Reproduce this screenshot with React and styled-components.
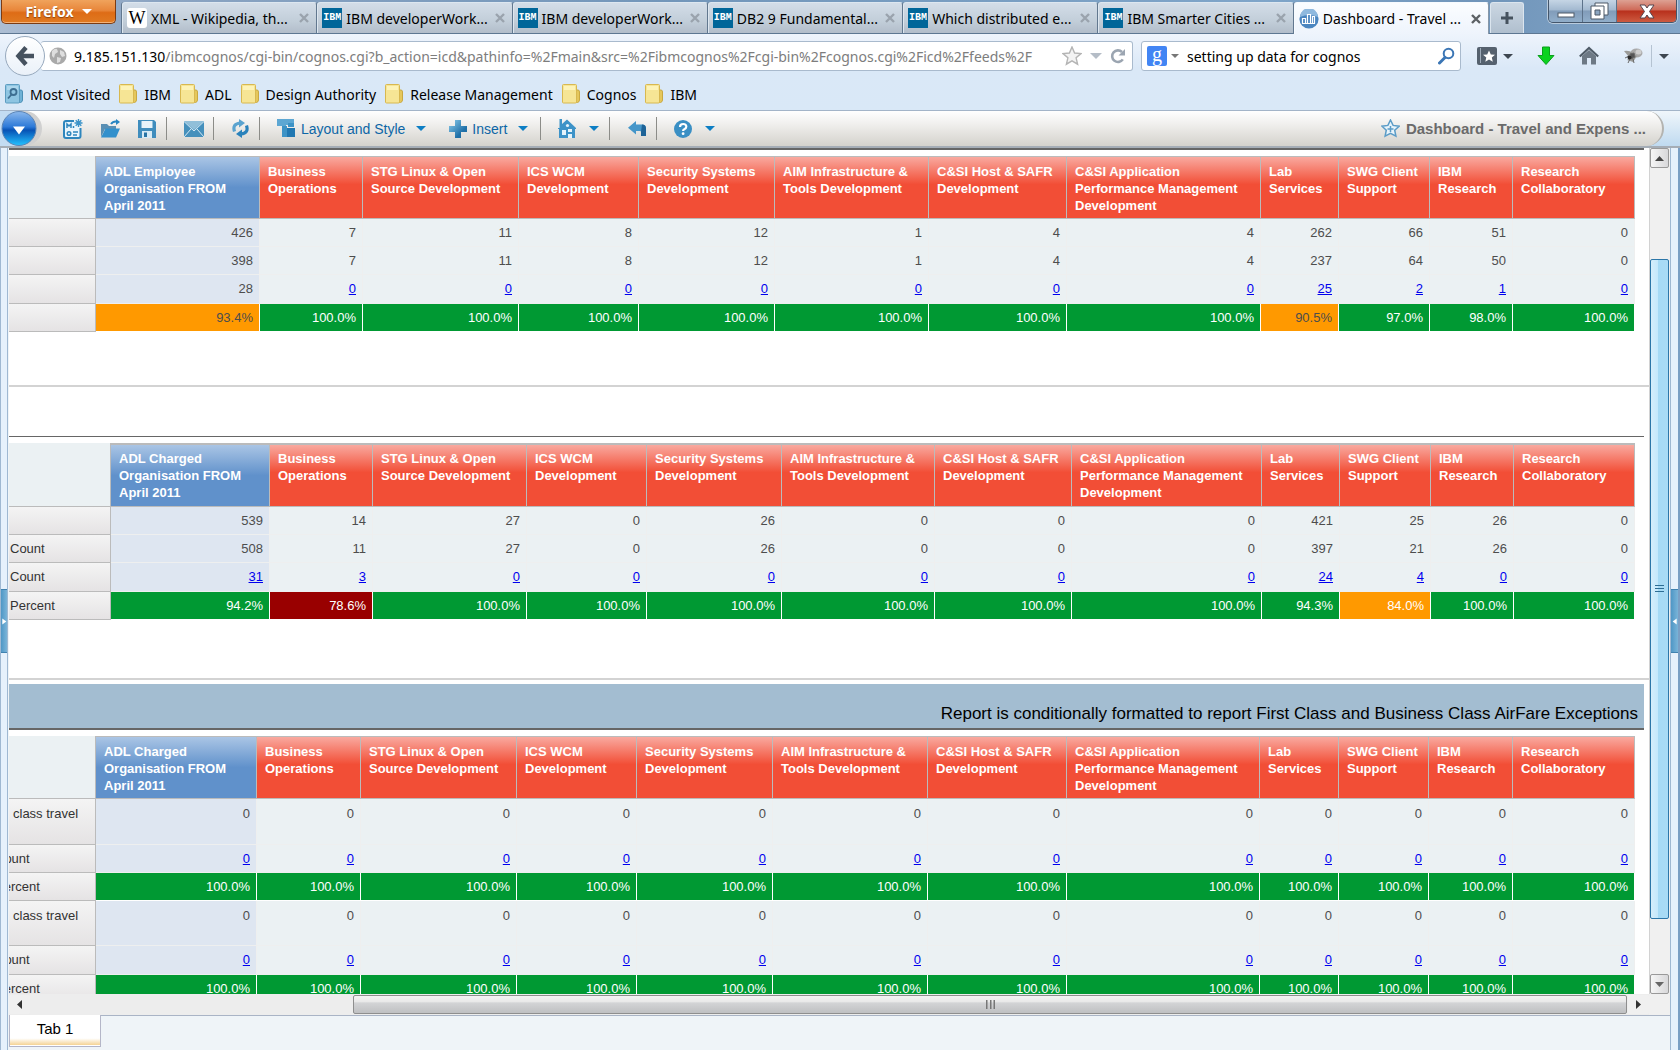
import React from "react";
import styled, { createGlobalStyle, css } from "styled-components";

const uiFont = '"Noto Sans", "Open Sans", sans-serif';
const reportFont = '"Liberation Sans", Arial, sans-serif';

const GlobalStyle = createGlobalStyle`
  *, *::before, *::after { box-sizing: border-box; }
  body { margin: 0; font-family: ${uiFont}; font-size: 14px; color: #000; background: #eff4f8; }
  button, input { font: inherit; color: inherit; margin: 0; padding: 0; border: 0; background: none; }
  svg { display: block; flex: none; }
`;

const Window = styled.div`
  display: flex;
  flex-direction: column;
  height: 100vh;
  overflow: hidden;
`;

/* ---------- title bar ---------- */
const TitleBar = styled.header`
  display: flex;
  height: 34px;
  flex: none;
  padding: 0 3px 0 1px;
  background: linear-gradient(100deg, #aebfd4 0, #8ba4c2 9%, #7296ba 40%, #7fa5c9 75%, #7095ba 88%, #84a6c8 100%);
  border-bottom: 1px solid #5d7792;
`;

const FirefoxButton = styled.button`
  display: flex;
  align-items: center;
  justify-content: center;
  gap: 8px;
  width: 115px;
  height: 24px;
  margin-right: 6px;
  color: #fff;
  font-size: 14px;
  font-weight: 700;
  text-shadow: 0 1px 1px #8a4410;
  background: linear-gradient(#f0a35c, #e8863a 45%, #de6c16 55%, #e07a22);
  border: 1px solid #7c3b12;
  border-top: 0;
  border-radius: 0 0 5px 5px;
  box-shadow: inset 0 -1px 0 #f3b27a;
`;

const TabStrip = styled.nav`
  display: flex;
  flex: 1;
  min-width: 0;
  padding-top: 2px;
`;

const BrowserTab = styled.div`
  display: flex;
  align-items: center;
  flex: 1 1 0;
  min-width: 0;
  height: ${(p) => (p.$active ? 32 : 31)}px;
  padding: 0 7px 0 4px;
  gap: 4px;
  background: ${(p) => (p.$active ? "linear-gradient(#fbfdff, #eef4fc)" : "linear-gradient(#d3dde8, #c2ced9 60%, #b2bdca)")};
  border: 1px solid ${(p) => (p.$active ? "#f7fbff" : "#dde7f0")};
  border-bottom: 0;
  border-right-color: #8697a8;
  border-radius: 3px 3px 0 0;
  box-shadow: -1px 0 0 #62788f;
`;

const TabLabel = styled.span`
  flex: 1;
  min-width: 0;
  white-space: nowrap;
`;

const Favicon = styled.span`
  display: grid;
  place-items: center;
  width: 20px;
  height: 20px;
  flex: none;
  border-radius: ${(p) => (p.$kind === "wiki" ? 3 : 0)}px;
  color: ${(p) => (p.$kind === "wiki" ? "#000" : "#fff")};
  background: ${(p) => ({ wiki: "#fff", ibm: "#006699", cognos: "transparent" })[p.$kind]};
  font: ${(p) => (p.$kind === "wiki" ? '18px/20px "Liberation Serif", serif' : '700 10px/20px "Liberation Mono", monospace')};
`;

const CloseButton = styled.button`
  width: 10px;
  height: 16px;
  color: ${(p) => (p.$active ? "#5c6165" : "#9aa3ad")};
`;

const NewTabButton = styled.button`
  display: grid;
  place-items: center;
  width: 34px;
  height: 31px;
  margin: 2px 24px 0 1px;
  color: #46525e;
  background: linear-gradient(#cbd7e3, #b0bfce);
  border: 1px solid #dbe5ee;
  border-bottom: 0;
  border-radius: 3px 3px 0 0;
`;

const WindowButtons = styled.div`
  display: flex;
  height: 23px;
  border: 1px solid #44566b;
  border-top: 0;
  border-radius: 0 0 5px 5px;
  overflow: hidden;
  box-shadow: 0 0 0 1px #b9cbdd;
`;

const WindowButton = styled.button`
  display: grid;
  place-items: center;
  width: ${(p) => (p.$close ? 59 : 34)}px;
  border-right: ${(p) => (p.$close ? 0 : 1)}px solid #5c728a;
  background: ${(p) =>
    p.$close
      ? "linear-gradient(#dda193, #cf6a58 45%, #b8301c 50%, #cd5a40)"
      : "linear-gradient(#c5d5e5, #a3b9d0 45%, #819cb9 50%, #91aeca)"};
`;

/* ---------- navigation ---------- */
const BrowserChrome = styled.div`
  flex: none;
  background: linear-gradient(#eef4fc, #dae8f7 45%, #d9e8f7);
  border-bottom: 1px solid #a3b4c8;
`;

const NavBar = styled.div`
  display: flex;
  align-items: center;
  height: 44px;
  padding: 0 11px 0 5px;
`;

const BackButton = styled.button`
  display: grid;
  place-items: center;
  width: 40px;
  height: 40px;
  flex: none;
  z-index: 1;
  margin-right: -4px;
  border: 1px solid #97a9bd;
  border-radius: 50%;
  background: linear-gradient(#fff, #eaf1f9);
`;

const Field = styled.label`
  display: flex;
  align-items: center;
  height: 30px;
  background: #fff;
  border: 1px solid #a9bacd;
  border-radius: 3px;
`;

const UrlField = styled(Field)`
  flex: 1;
  min-width: 0;
  padding: 0 6px 0 8px;
  margin-right: 8px;
  border-left: 0;
`;

const Host = styled.span`
  margin-left: 7px;
`;

const UrlInput = styled.input`
  flex: 1;
  min-width: 0;
  color: #7d7d7d;
  outline: 0;
`;

const UrlTools = styled.span`
  display: flex;
  align-items: center;
  gap: 8px;
  padding-left: 6px;
`;

const SearchField = styled(Field)`
  width: 320px;
  padding: 0 5px;
`;

const GoogleBadge = styled.span`
  width: 20px;
  height: 20px;
  margin-right: 4px;
  flex: none;
  color: #fff;
  text-align: center;
  font: 20px/16px "Liberation Serif", serif;
  background: #4285f4;
  border-radius: 2px;
`;

const SearchInput = styled.input`
  flex: 1;
  min-width: 0;
  padding-left: 8px;
  outline: 0;
`;

const NavIcons = styled.div`
  display: flex;
  align-items: center;
  padding-left: 16px;
  gap: 24px;
`;

const IconButton = styled.button`
  display: flex;
  align-items: center;
  gap: 6px;
`;

const MoreButton = styled(IconButton)`
  height: 22px;
  padding-left: 7px;
  margin-left: -16px;
  border-left: 1px solid #b5c3d2;
`;

const Triangle = styled.span`
  width: 0;
  height: 0;
  flex: none;
  border: ${(p) => p.$size || 5}px solid transparent;
  border-top-color: ${(p) => p.$color || "#3d4650"};
  border-bottom: 0;
`;

const BookmarkBar = styled.div`
  display: flex;
  align-items: center;
  height: 32px;
  padding-left: 5px;
  gap: 9px;
`;

const Bookmark = styled.a`
  display: flex;
  align-items: center;
  gap: 7px;
  color: #000;
  text-decoration: none;
  white-space: nowrap;
`;

/* ---------- Cognos toolbar ---------- */
const ToolRow = styled.div`
  display: flex;
  flex: none;
  height: 37px;
  background: linear-gradient(#f0f6fb, #bfdaf0);
  border-bottom: 2px solid #a5adb6;
`;

const Toolbar = styled.div`
  display: flex;
  align-items: center;
  flex: 1;
  min-width: 0;
  margin-right: 16px;
  padding-right: 16px;
  font-family: ${reportFont};
  font-size: 14px;
  color: #0d66a6;
  background: linear-gradient(#fff, #efeeec 40%, #d4d2cc);
  border-right: 2px solid #b3b3b0;
  border-radius: 0 18px 18px 0;
`;

const OrbButton = styled.button`
  display: grid;
  place-items: center;
  width: 42px;
  height: 35px;
  padding-right: 4px;
  margin-right: 21px;
  background: linear-gradient(90deg, #c3dcf2 50%, #d0d0d0 50%);
  border-radius: 0 18px 18px 0;
`;

const Tool = styled.button`
  display: flex;
  align-items: center;
  gap: ${(p) => p.$gap || 5}px;
  margin-right: ${(p) => p.$after || 0}px;
  white-space: nowrap;
`;

const ToolText = styled.span`
  margin-right: 6px;
`;

const Separator = styled.span`
  width: 1px;
  height: 23px;
  flex: none;
  margin-right: ${(p) => p.$after}px;
  background: #8c8c88;
`;

const DashboardTitle = styled.h1`
  display: flex;
  align-items: center;
  gap: 6px;
  margin: 0 0 0 auto;
  font-size: 15px;
  font-weight: 700;
  color: #6a6a6a;
  white-space: nowrap;
`;

/* ---------- workspace ---------- */
const Workspace = styled.main`
  display: flex;
  flex: 1;
  min-height: 0;
`;

const SideRail = styled.aside`
  display: flex;
  flex-direction: column;
  justify-content: center;
  flex: none;
  width: ${(p) => (p.$right ? 10 : 8)}px;
  padding-top: 44px;
  background: #e6f1fc;
  border: solid #9fb8d2;
  border-width: 0 1px;
  ${(p) => p.$right && css`border-right: 2px solid #7a9fc4;`}
`;

const RailHandle = styled.button`
  display: grid;
  place-items: center;
  height: 64px;
  color: #fff;
  background: linear-gradient(90deg, #4f97c6, #7ab4d8);
  border: solid #3f82b0;
  border-width: 1px 0;
`;

const Center = styled.div`
  display: flex;
  flex-direction: column;
  flex: 1;
  min-width: 0;
  padding-left: 1px;
`;

const ScrollFrame = styled.div`
  display: grid;
  grid-template: minmax(0, 1fr) 21px / minmax(0, 1fr) 21px;
  flex: 1;
  min-height: 0;
  background: #f0f0f0;
`;

const Reports = styled.div`
  overflow: hidden;
  background: #fff;
  font-family: ${reportFont};
  font-size: 13px;
  line-height: 17px;
`;

const Report = styled.section`
  padding-bottom: ${(p) => p.$space || 0}px;
  border-bottom: 2px solid #d3d3d3;
`;

const Rule = styled.div`
  height: ${(p) => p.$thick || 1}px;
  margin: ${(p) => p.$above || 0}px 5px 6px 0;
  background: #666;
`;

const Banner = styled.h2`
  display: flex;
  justify-content: flex-end;
  align-items: flex-end;
  height: 46px;
  margin: 4px 5px 6px 0;
  padding: 0 6px 4px;
  font-size: 17px;
  line-height: 20px;
  font-weight: 400;
  background: #a3bdd1;
  border-bottom: 2px solid #666;
`;

const Grid = styled.table`
  table-layout: fixed;
  border-collapse: separate;
  border-spacing: 0;
  width: calc(100% - 14px + ${(p) => p.$bleed}px);
  margin-left: -${(p) => p.$bleed}px;
`;

const Col = styled.col`
  width: ${(p) => p.$w}px;
`;

const Corner = styled.td`
  background: #ebf1f3;
  border: solid #bbb;
  border-width: 0 1px 1px 0;
`;

const HeadCell = styled.th`
  height: ${(p) => 62 + p.$edge}px;
  padding: ${(p) => 7 - p.$edge}px 0 4px 8px;
  text-align: left;
  vertical-align: top;
  color: #fff;
  white-space: pre;
  background: ${(p) =>
    p.$lead
      ? "linear-gradient(#aac5e5, #6091cb 50%)"
      : "linear-gradient(#f9a99f, #f24e36 45%)"};
  border: solid #bbb;
  border-width: ${(p) => p.$edge}px 1px 1px 0;
`;

const RowLabel = styled.th`
  padding: ${(p) => (p.$tall ? 6 : 5)}px 0 4px ${(p) => (p.$tall ? 26 : 8)}px;
  text-align: left;
  vertical-align: top;
  font-weight: 400;
  color: #333;
  white-space: nowrap;
  background: linear-gradient(#f4f4f4, #e5e3e4);
  border: solid #bbb;
  border-width: 0 1px 1px 0;
`;

const tones = {
  green: ["#009933", "#fff"],
  red: ["#990000", "#fff"],
  amber: ["#ff9900", "#4d4d4d"],
  amberLight: ["#ff9900", "#fff"],
};

const Cell = styled.td`
  height: ${(p) => p.$h}px;
  padding: ${(p) => (p.$tall ? 6 : 5)}px 6px 4px;
  text-align: right;
  vertical-align: top;
  color: ${(p) => (p.$tone ? tones[p.$tone][1] : "#4d4d4d")};
  background: ${(p) => (p.$tone ? tones[p.$tone][0] : p.$lead ? "#dee6f1" : "#ebf1f3")};
  border: solid ${(p) => (p.$tone ? "#fff" : "#eeefef")};
  border-width: 0 1px 1px 0;
`;

const CellLink = styled.a`
  color: #0000ee;
`;

/* ---------- scroll bars and sheet tabs ---------- */
const VScroll = styled.div`
  display: flex;
  flex-direction: column;
  border-left: 1px solid #d2d2d2;
  background: #f0f0f0;
`;

const HScroll = styled.div`
  display: flex;
  padding: 1px 0;
  background: #ededed;
`;

const ArrowButton = styled.button`
  display: grid;
  place-items: center;
  width: ${(p) => (p.$flat ? 21 : 19)}px;
  height: ${(p) => (p.$flat ? 19 : 20)}px;
  flex: none;
  background: ${(p) => (p.$flat ? "#f0f0f0" : "linear-gradient(90deg, #f6f6f6, #d8d8da)")};
  border: ${(p) => (p.$flat ? 0 : 1)}px solid #999;
  border-radius: 2px;
`;

const Track = styled.div`
  display: grid;
  flex: 1;
  min-width: 0;
  min-height: 0;
  ${(p) =>
    p.$vertical
      ? css`grid-template-rows: 91fr 659fr 55fr;`
      : css`grid-template-columns: 323fr 1274fr 1fr;`}
`;

const VThumb = styled.button`
  display: grid;
  place-items: center;
  grid-row: 2;
  width: 19px;
  background: linear-gradient(90deg, #d5eefb, #c5e8fb 40%, #a6daf5 41%, #a9dbf5);
  border: 1px solid #2c76a8;
  border-radius: 2px;
`;

const HThumb = styled.button`
  display: grid;
  place-items: center;
  grid-column: 2;
  background: linear-gradient(#f4f4f4, #e8e8e8 35%, #d3d4d6 40%, #bfc0c2);
  border: 1px solid #8e8e8e;
  border-radius: 2px;
`;

const SheetBar = styled.div`
  height: 35px;
  flex: none;
  background: #eff4f8;
  border-top: 1px solid #a9b4c6;
`;

const SheetTab = styled.button`
  width: 92px;
  height: 32px;
  margin-top: -1px;
  padding-bottom: 4px;
  font-family: ${reportFont};
  font-size: 15px;
  background: linear-gradient(#fff 75%, #f3cd85);
  border: 1px solid #b4b6c8;
  border-top: 0;
  box-shadow: inset 0 -1px 0 #fff;
`;

/* ---------- icons ---------- */
const CrossIcon = () => (
  <svg width="10" height="16" viewBox="0 0 10 16" stroke="currentColor" strokeWidth="2.4" aria-hidden="true">
    <path d="M1 4l8 8M9 4l-8 8" />
  </svg>
);

const CognosIcon = () => (
  <svg width="20" height="20" viewBox="0 0 20 20" aria-hidden="true">
    <circle cx="10" cy="10" r="9.6" fill="#4b86c0" />
    <path d="M1 8a9 9 0 0 1 18 0q-9-4-18 0z" fill="#8fb9de" />
    <path d="M3.500 14.500v-5h3v5M8.500 14.500v-9h3v9M13.500 14.500v-7h2v7M3 14.500h13" fill="none" stroke="#fff" strokeWidth="1.200" />
  </svg>
);

const FolderIcon = ({ blue }) => (
  <svg width="18" height="20" viewBox="0 0 18 20" aria-hidden="true">
    <path d="M12 6h4q1.500 0 1.500 2v8q0 2-2 2.500H3" fill={blue ? "#6fb2d6" : "#e5c75c"} stroke={blue ? "#4b8fb5" : "#c9a942"} />
    <rect x="0.500" y="0.500" width="14" height="18.500" rx="1" fill={blue ? "#8ec5e2" : "#f6e595"} stroke={blue ? "#5d9cc0" : "#d8b850"} />
    <path d="M2 2h11v4H2z" fill={blue ? "#acd6ec" : "#fdf3b8"} />
    {blue && (
      <g fill="none" stroke="#3d6f92" strokeWidth="1.800">
        <circle cx="8.500" cy="8" r="3" />
        <path d="M6.500 10.500L3 14.500" />
      </g>
    )}
  </svg>
);

const GlobeIcon = () => (
  <svg width="18" height="18" viewBox="0 0 18 18" aria-hidden="true">
    <circle cx="9" cy="9" r="8.500" fill="#a9a9a9" />
    <path d="M3 4q3-3 5-2l1 3-3 2-1 4-2-2zM11 3l4 2 1 4-3 1-2-3zM8 10l4 1-1 4-3 1z" fill="#dedede" />
  </svg>
);

const UrlStarIcon = () => (
  <svg width="20" height="20" viewBox="0 0 20 20" aria-hidden="true">
    <path d="M10 1l2.600 6 6.400.6-4.900 4.200 1.500 6.400L10 14.800l-5.600 3.400 1.500-6.400L1 7.600 7.400 7z" fill="#f3f3f3" stroke="#b4b4b4" strokeWidth="1.400" />
  </svg>
);

const ReloadIcon = () => (
  <svg width="16" height="16" viewBox="0 0 16 16" aria-hidden="true">
    <path d="M12.800 11.400A5.800 5.800 0 1 1 12 4" fill="none" stroke="#9ba5b1" strokeWidth="2.600" />
    <path d="M15 1v6.500H8.500z" fill="#9ba5b1" />
  </svg>
);

const SearchIcon = () => (
  <svg width="17" height="18" viewBox="0 0 17 18" fill="none" stroke="#3b76b5" aria-hidden="true">
    <circle cx="10.500" cy="6.500" r="4.800" strokeWidth="2" />
    <path d="M7 10.500L1.500 16" strokeWidth="3" strokeLinecap="round" />
  </svg>
);

const BookmarksMenuIcon = () => (
  <svg width="20" height="18" viewBox="0 0 20 18" aria-hidden="true">
    <rect width="20" height="18" rx="2" fill="#55616e" />
    <path d="M3.500 1v15" stroke="#9fabb8" />
    <path d="M12 3.500l1.800 4 4.200.3-3.200 2.800 1 4.200L12 12.500l-3.700 2.300 1-4.200L6 7.800l4.200-.3z" fill="#fff" />
  </svg>
);

const DownloadIcon = () => (
  <svg width="18" height="20" viewBox="0 0 18 20" aria-hidden="true">
    <path d="M5.500 1h7v8.500H17L9 18.500 1 9.500h4.500z" fill="#0bd21f" stroke="#0a9f1b" />
  </svg>
);

const HomeIcon = () => (
  <svg width="20" height="20" viewBox="0 0 20 20" aria-hidden="true">
    <path d="M3 10l7-6 7 6v8.500h-5V12H8v6.500H3z" fill="#6d7985" />
    <path d="M.8 10.500L10 2l9.200 8.500" fill="none" stroke="#4f5b67" strokeWidth="2.200" />
  </svg>
);

const FireflyIcon = () => (
  <svg width="20" height="18" viewBox="0 0 20 18" aria-hidden="true">
    <ellipse cx="13.500" cy="6" rx="6" ry="4.500" fill="#a9a9a9" />
    <ellipse cx="15.500" cy="5" rx="3" ry="2.500" fill="#cfcfcf" />
    <path d="M1 4q5-1 9 2L6 10zM4 13l6-6 4 2-4 6z" fill="#9b9b98" />
    <path d="M7 7l4-1 1 4-4 2zM2 11l4-2M5 16l2-4M11 16l-1-4" fill="#555" stroke="#666" />
    <circle cx="6.500" cy="10.500" r="2" fill="#2b2b2b" />
  </svg>
);

const blue = "#2e86bd";

const OrbIcon = () => (
  <svg width="36" height="35" viewBox="0 0 36 35" aria-hidden="true">
    <defs>
      <linearGradient id="orb" x1="0" y1="0" x2="0" y2="1">
        <stop offset="0" stopColor="#8bb8ec" />
        <stop offset="0.450" stopColor="#2c79d8" />
        <stop offset="0.550" stopColor="#0752b5" />
        <stop offset="1" stopColor="#25c3ff" />
      </linearGradient>
    </defs>
    <circle cx="18" cy="17.500" r="17" fill="url(#orb)" stroke="#5c84b4" />
    <path d="M12 15.500h12L18 23.500z" fill="#fff" />
  </svg>
);

const NewDashIcon = () => (
  <svg width="20" height="20" viewBox="0 0 20 20" aria-hidden="true">
    <path d="M11 2H3Q1 2 1 4v13q0 2 2 2h12.500q2 0 2-2V9" fill="#e9f5fc" stroke={blue} strokeWidth="2" />
    <path d="M4 9V5l2 2 2-2v4M10.500 9V7M10 13h5M10 16h4" fill="none" stroke={blue} strokeWidth="1.500" />
    <circle cx="6" cy="14.500" r="1.800" fill="none" stroke={blue} strokeWidth="1.500" />
    <path d="M15.500 0v8M11.500 4h8M12.700 1.200l5.600 5.600M18.300 1.200l-5.600 5.600" stroke="#3a93c9" strokeWidth="1.400" />
  </svg>
);

const OpenIcon = () => (
  <svg width="20" height="20" viewBox="0 0 20 20" aria-hidden="true">
    <path d="M1 5h6l2 2h7v3H5L1 18z" fill="#5a8fb3" />
    <path d="M5.500 9.500H20L16 18.500H1z" fill="#3290cc" />
    <path d="M11 5q2-3 6-2.500" fill="none" stroke="#2785c2" strokeWidth="2" />
    <path d="M16 0l4 3-4 3z" fill="#2785c2" />
  </svg>
);

const SaveIcon = () => (
  <svg width="18" height="18" viewBox="0 0 18 18" aria-hidden="true">
    <path d="M0 0h16l2 2v16H0z" fill="#3f8dbd" />
    <path d="M3.500 1h11v7h-11z" fill="#e7f3fa" />
    <path d="M4 11h10v7H4z" fill="#d8ebf5" />
    <path d="M6 12.500h3V17H6z" fill="#2874a5" />
  </svg>
);

const MailIcon = () => (
  <svg width="20" height="16" viewBox="0 0 20 16" aria-hidden="true">
    <path d="M0 0h20v16H0z" fill="#4590bc" />
    <path d="M0 0h20l-10 9z" fill="#91bfd9" />
    <path d="M0 .5L10 10 20 .5M0 16l7-8M20 16l-7-8" fill="none" stroke="#d6e9f4" />
  </svg>
);

const RefreshIcon = () => (
  <svg width="17" height="19" viewBox="0 0 17 19" fill="none" stroke="#2a82bb" strokeWidth="3.200" aria-hidden="true">
    <path d="M2.500 12.500Q0 5 8 4" stroke="#5aa3cf" />
    <path d="M14.500 6.500Q17 14 9 15" />
    <path d="M7 0l6 4-6 4.500z" fill="#5aa3cf" stroke="none" />
    <path d="M10 10.500V19l-6-4z" fill="#2a82bb" stroke="none" />
  </svg>
);

const LayoutIcon = () => (
  <svg width="19" height="19" viewBox="0 0 19 19" aria-hidden="true">
    <path d="M0 0h17v6H9v5H5V7H0z" fill="#5da7d3" />
    <path d="M5 7h5v11H5z" fill="#3d93c6" />
    <path d="M10 9h8v9h-8z" fill="#2178b2" />
    <path d="M11 4h6v4h-6z" fill="#3d93c6" />
  </svg>
);

const PlusIcon = () => (
  <svg width="18" height="18" viewBox="0 0 18 18" aria-hidden="true">
    <defs>
      <linearGradient id="plus" x1="0" y1="0" x2="1" y2="1">
        <stop offset="0.200" stopColor="#6fb3d9" />
        <stop offset="0.700" stopColor="#1f70a8" />
      </linearGradient>
    </defs>
    <path d="M6 0h6v6h6v6h-6v6H6v-6H0V6h6z" fill="url(#plus)" />
  </svg>
);

const HouseChartIcon = () => (
  <svg width="18" height="19" viewBox="0 0 18 19" aria-hidden="true">
    <path d="M0 9h1.500V0H4v5l5-4.500L18 9v1h-1v9H1v-9H0z" fill="#3d93c8" />
    <circle cx="9.500" cy="6.500" r="1.600" fill="#e4f3fb" />
    <path d="M4 11h4v5H4zM10 10h4v3h-4zM10 15h4v4h-4z" fill="#e4f3fb" />
  </svg>
);

const UndoIcon = () => (
  <svg width="18" height="15" viewBox="0 0 18 15" aria-hidden="true">
    <path d="M8 0v3.500h6q4 0 4 4V15h-5v-4q0-1-1-1H8v3.500L0 6.700z" fill="#4596c9" />
    <path d="M14 3.500q4 0 4 4V15h-5v-4z" fill="#1d6397" />
  </svg>
);

const HelpIcon = () => (
  <svg width="18" height="18" viewBox="0 0 18 18" aria-hidden="true">
    <circle cx="9" cy="9" r="9" fill="#3a8fc4" />
    <path d="M6 7q0-3 3.200-3T12.300 6.800Q12.300 8.500 10 9.400 9.100 9.900 9.100 11" fill="none" stroke="#fff" strokeWidth="2.200" />
    <circle cx="9.100" cy="13.700" r="1.400" fill="#fff" />
  </svg>
);

const TitleStarIcon = () => (
  <svg width="19" height="19" viewBox="0 0 19 19" fill="#e8f4fb" stroke="#5b9cc7" aria-hidden="true">
    <path d="M9.500 1l2.600 5.400 6 .8-4.400 4 1.200 6-5.400-2.900L4.100 17.200l1.200-6L1 7.200l5.900-.8z" strokeWidth="1.500" />
    <path d="M9.500 7v6M6.500 10h6" strokeWidth="1.500" />
  </svg>
);

const Arrow = ({ d, w = 9, h = 9, fill = "#444" }) => (
  <svg width={w} height={h} viewBox="0 0 9 9" aria-hidden="true">
    <path d={d} fill={fill} />
  </svg>
);

/* ---------- data ---------- */
const units = [
  "Business\nOperations",
  "STG Linux & Open\nSource Development",
  "ICS WCM\nDevelopment",
  "Security Systems\nDevelopment",
  "AIM Infrastructure &\nTools Development",
  "C&SI Host & SAFR\nDevelopment",
  "C&SI Application\nPerformance Management\nDevelopment",
  "Lab\nServices",
  "SWG Client\nSupport",
  "IBM\nResearch",
  "Research\nCollaboratory",
];

const zeros = Array(12).fill(0);
const full = Array(12).fill("100.0%");

const employeeReport = {
  lead: "ADL Employee\nOrganisation FROM\nApril 2011",
  bleed: 22,
  edge: 1,
  cols: [109, 164, 103, 156, 120, 136, 154, 138, 194, 78, 91, 83, 122],
  rows: [
    { h: 28, values: [426, 7, 11, 8, 12, 1, 4, 4, 262, 66, 51, 0] },
    { h: 28, values: [398, 7, 11, 8, 12, 1, 4, 4, 237, 64, 50, 0] },
    { h: 29, values: [28, 0, 0, 0, 0, 0, 0, 0, 25, 2, 1, 0], linkFrom: 1 },
    {
      h: 28,
      values: ["93.4%", ...Array(7).fill("100.0%"), "90.5%", "97.0%", "98.0%", "100.0%"],
      tones: { 0: "amber", 8: "amber" },
    },
  ],
};

const chargedReport = {
  lead: "ADL Charged\nOrganisation FROM\nApril 2011",
  bleed: 7,
  edge: 2,
  cols: [109, 159, 103, 154, 120, 135, 153, 137, 190, 78, 91, 83, 121],
  rows: [
    { h: 28, values: [539, 14, 27, 0, 26, 0, 0, 0, 421, 25, 26, 0] },
    { h: 28, label: "Count", values: [508, 11, 27, 0, 26, 0, 0, 0, 397, 21, 26, 0] },
    { h: 29, label: "Count", values: [31, 3, 0, 0, 0, 0, 0, 0, 24, 4, 0, 0], linkFrom: 0 },
    {
      h: 28,
      label: "Percent",
      values: ["94.2%", "78.6%", ...Array(6).fill("100.0%"), "94.3%", "84.0%", "100.0%", "100.0%"],
      tones: { 1: "red", 9: "amberLight" },
    },
  ],
};

const airfareReport = {
  lead: "ADL Charged\nOrganisation FROM\nApril 2011",
  bleed: 22,
  edge: 1,
  cols: [109, 161, 104, 156, 120, 136, 155, 139, 193, 79, 90, 84, 122],
  rows: [
    { h: 46, label: "class travel", tall: true, values: zeros },
    { h: 28, label: "Count", values: zeros, linkFrom: 0 },
    { h: 28, label: "Percent", values: full, tones: {} },
    { h: 45, label: "class travel", tall: true, values: zeros },
    { h: 29, label: "Count", values: zeros, linkFrom: 0 },
    { h: 28, label: "Percent", values: full, tones: {} },
  ],
};

const browserTabs = [
  ["wiki", "XML - Wikipedia, th..."],
  ["ibm", "IBM developerWork..."],
  ["ibm", "IBM developerWork..."],
  ["ibm", "DB2 9 Fundamental..."],
  ["ibm", "Which distributed e..."],
  ["ibm", "IBM Smarter Cities ..."],
  ["cognos", "Dashboard - Travel ..."],
];

const faviconContent = { wiki: "W", ibm: "IBM", cognos: <CognosIcon /> };

const bookmarks = ["Most Visited", "IBM", "ADL", "Design Authority", "Release Management", "Cognos", "IBM"];

function ReportTable({ report }) {
  return (
    <Grid $bleed={report.bleed}>
      <colgroup>
        {report.cols.map((w, i) => (
          <Col key={i} $w={w} />
        ))}
      </colgroup>
      <thead>
        <tr>
          <Corner />
          {[report.lead, ...units].map((name, i) => (
            <HeadCell key={i} scope="col" $lead={i === 0} $edge={report.edge}>
              {name}
            </HeadCell>
          ))}
        </tr>
      </thead>
      <tbody>
        {report.rows.map((row, r) => (
          <tr key={r}>
            <RowLabel scope="row" $tall={row.tall}>{row.label}</RowLabel>
            {row.values.map((value, i) => (
              <Cell
                key={i}
                $h={row.h}
                $tall={row.tall}
                $lead={i === 0}
                $tone={row.tones && (row.tones[i] || "green")}
              >
                {row.linkFrom <= i ? <CellLink href="#detail">{value}</CellLink> : value}
              </Cell>
            ))}
          </tr>
        ))}
      </tbody>
    </Grid>
  );
}

export default function App() {
  return (
    <Window>
      <GlobalStyle />
      <TitleBar>
        <FirefoxButton>
          Firefox <Triangle $color="#fff" />
        </FirefoxButton>
        <TabStrip>
          {browserTabs.map(([kind, label], i) => {
            const active = i === browserTabs.length - 1;
            return (
              <BrowserTab key={i} $active={active}>
                <Favicon $kind={kind}>{faviconContent[kind]}</Favicon>
                <TabLabel>{label}</TabLabel>
                <CloseButton $active={active} aria-label="Close tab">
                  <CrossIcon />
                </CloseButton>
              </BrowserTab>
            );
          })}
        </TabStrip>
        <NewTabButton aria-label="New tab">
          <svg width="14" height="14" viewBox="0 0 14 14" stroke="currentColor" strokeWidth="3" aria-hidden="true">
            <path d="M7 1v12M1 7h12" />
          </svg>
        </NewTabButton>
        <WindowButtons>
          <WindowButton aria-label="Minimize">
            <svg width="18" height="18" viewBox="0 0 18 18" aria-hidden="true">
              <rect x="1" y="11" width="16" height="4" fill="#fff" stroke="#4d5866" />
            </svg>
          </WindowButton>
          <WindowButton aria-label="Restore">
            <svg width="19" height="18" viewBox="0 0 19 18" fill="#fff" stroke="#4d5866" aria-hidden="true">
              <path d="M5 1h13v12H5z" />
              <path d="M1 4h13v13H1z" />
              <path d="M5 8h5v5H5z" fill="#8ba5c0" />
            </svg>
          </WindowButton>
          <WindowButton $close aria-label="Close">
            <svg width="16" height="15" viewBox="0 0 16 15" aria-hidden="true">
              <path d="M1 1h5l2 3 2-3h5l-4.500 6.500L15 14h-5l-2-3-2 3H1l4.500-6.500z" fill="#fff" stroke="#54444c" />
            </svg>
          </WindowButton>
        </WindowButtons>
      </TitleBar>

      <BrowserChrome>
        <NavBar>
          <BackButton aria-label="Back">
            <svg width="20" height="20" viewBox="0 0 20 20" fill="none" stroke="#46525f" strokeWidth="4.500" aria-hidden="true">
              <path d="M11 1.500L3.500 10l7.500 8.500M4 10h15" />
            </svg>
          </BackButton>
          <UrlField>
            <GlobeIcon />
            <Host>9.185.151.130</Host>
            <UrlInput
              aria-label="Address"
              defaultValue="/ibmcognos/cgi-bin/cognos.cgi?b_action=icd&pathinfo=%2Fmain&src=%2Fibmcognos%2Fcgi-bin%2Fcognos.cgi%2Ficd%2Ffeeds%2F"
            />
            <UrlTools>
              <UrlStarIcon />
              <Triangle $size={6} $color="#b5bdc7" />
              <ReloadIcon />
            </UrlTools>
          </UrlField>
          <SearchField>
            <GoogleBadge>g</GoogleBadge>
            <Triangle $size={4} $color="#777" />
            <SearchInput aria-label="Search" defaultValue="setting up data for cognos" />
            <SearchIcon />
          </SearchField>
          <NavIcons>
            <IconButton aria-label="Bookmarks">
              <BookmarksMenuIcon />
              <Triangle />
            </IconButton>
            <IconButton aria-label="Downloads"><DownloadIcon /></IconButton>
            <IconButton aria-label="Home"><HomeIcon /></IconButton>
            <IconButton aria-label="Add-on"><FireflyIcon /></IconButton>
            <MoreButton aria-label="More"><Triangle /></MoreButton>
          </NavIcons>
        </NavBar>
        <BookmarkBar>
          {bookmarks.map((name, i) => (
            <Bookmark key={i} href="#bookmark">
              <FolderIcon blue={i === 0} />
              {name}
            </Bookmark>
          ))}
        </BookmarkBar>
      </BrowserChrome>

      <ToolRow>
        <Toolbar>
          <OrbButton aria-label="Main menu"><OrbIcon /></OrbButton>
          <Tool $after={17} aria-label="New"><NewDashIcon /></Tool>
          <Tool $after={18} aria-label="Open"><OpenIcon /></Tool>
          <Tool $after={10} aria-label="Save"><SaveIcon /></Tool>
          <Separator $after={17} />
          <Tool $after={9} aria-label="Email"><MailIcon /></Tool>
          <Separator $after={18} />
          <Tool $after={10} aria-label="Refresh"><RefreshIcon /></Tool>
          <Separator $after={17} />
          <Tool $after={23}>
            <LayoutIcon />
            <ToolText>Layout and Style</ToolText>
            <Triangle $color="#0d7ec4" />
          </Tool>
          <Tool $after={12}>
            <PlusIcon />
            <ToolText>Insert</ToolText>
            <Triangle $color="#0d7ec4" />
          </Tool>
          <Separator $after={17} />
          <Tool $after={10} $gap={13} aria-label="Home view">
            <HouseChartIcon />
            <Triangle $color="#0d7ec4" />
          </Tool>
          <Separator $after={18} />
          <Tool $after={10} aria-label="Undo"><UndoIcon /></Tool>
          <Separator $after={17} />
          <Tool $gap={13} aria-label="Help">
            <HelpIcon />
            <Triangle $color="#0d7ec4" />
          </Tool>
          <DashboardTitle>
            <TitleStarIcon />
            Dashboard - Travel and Expens ...
          </DashboardTitle>
        </Toolbar>
      </ToolRow>

      <Workspace>
        <SideRail>
          <RailHandle aria-label="Open left pane">
            <Arrow d="M2 0l6 4.500L2 9z" w={6} fill="#fff" />
          </RailHandle>
        </SideRail>
        <Center>
          <ScrollFrame>
            <Reports>
              <Report $space={53}>
                <Rule $thick={2} />
                <ReportTable report={employeeReport} />
              </Report>
              <Report $space={58}>
                <Rule $above={49} />
                <ReportTable report={chargedReport} />
              </Report>
              <Report>
                <Banner>Report is conditionally formatted to report First Class and Business Class AirFare Exceptions</Banner>
                <ReportTable report={airfareReport} />
              </Report>
            </Reports>
            <VScroll>
              <ArrowButton aria-label="Scroll up"><Arrow d="M4.500 2l4.500 5H0z" /></ArrowButton>
              <Track $vertical>
                <VThumb aria-label="Vertical position">
                  <Arrow d="M0 0h9v1H0zM0 3h9v1H0zM0 6h9v1H0z" fill="#2d6d94" />
                </VThumb>
              </Track>
              <ArrowButton aria-label="Scroll down"><Arrow d="M4.500 7L0 2h9z" fill="#666" /></ArrowButton>
            </VScroll>
            <HScroll>
              <ArrowButton $flat aria-label="Scroll left"><Arrow d="M2 4.500L7 0v9z" fill="#333" /></ArrowButton>
              <Track>
                <HThumb aria-label="Horizontal position">
                  <Arrow d="M0 0h1.500v9H0zM4 0h1.500v9H4zM7.500 0H9v9H7.500z" fill="#777" />
                </HThumb>
              </Track>
              <ArrowButton $flat aria-label="Scroll right"><Arrow d="M7 4.500L2 0v9z" fill="#333" /></ArrowButton>
            </HScroll>
          </ScrollFrame>
          <SheetBar>
            <SheetTab>Tab 1</SheetTab>
          </SheetBar>
        </Center>
        <SideRail $right>
          <RailHandle aria-label="Open right pane">
            <Arrow d="M7 0L1 4.500 7 9z" w={6} fill="#fff" />
          </RailHandle>
        </SideRail>
      </Workspace>
    </Window>
  );
}
